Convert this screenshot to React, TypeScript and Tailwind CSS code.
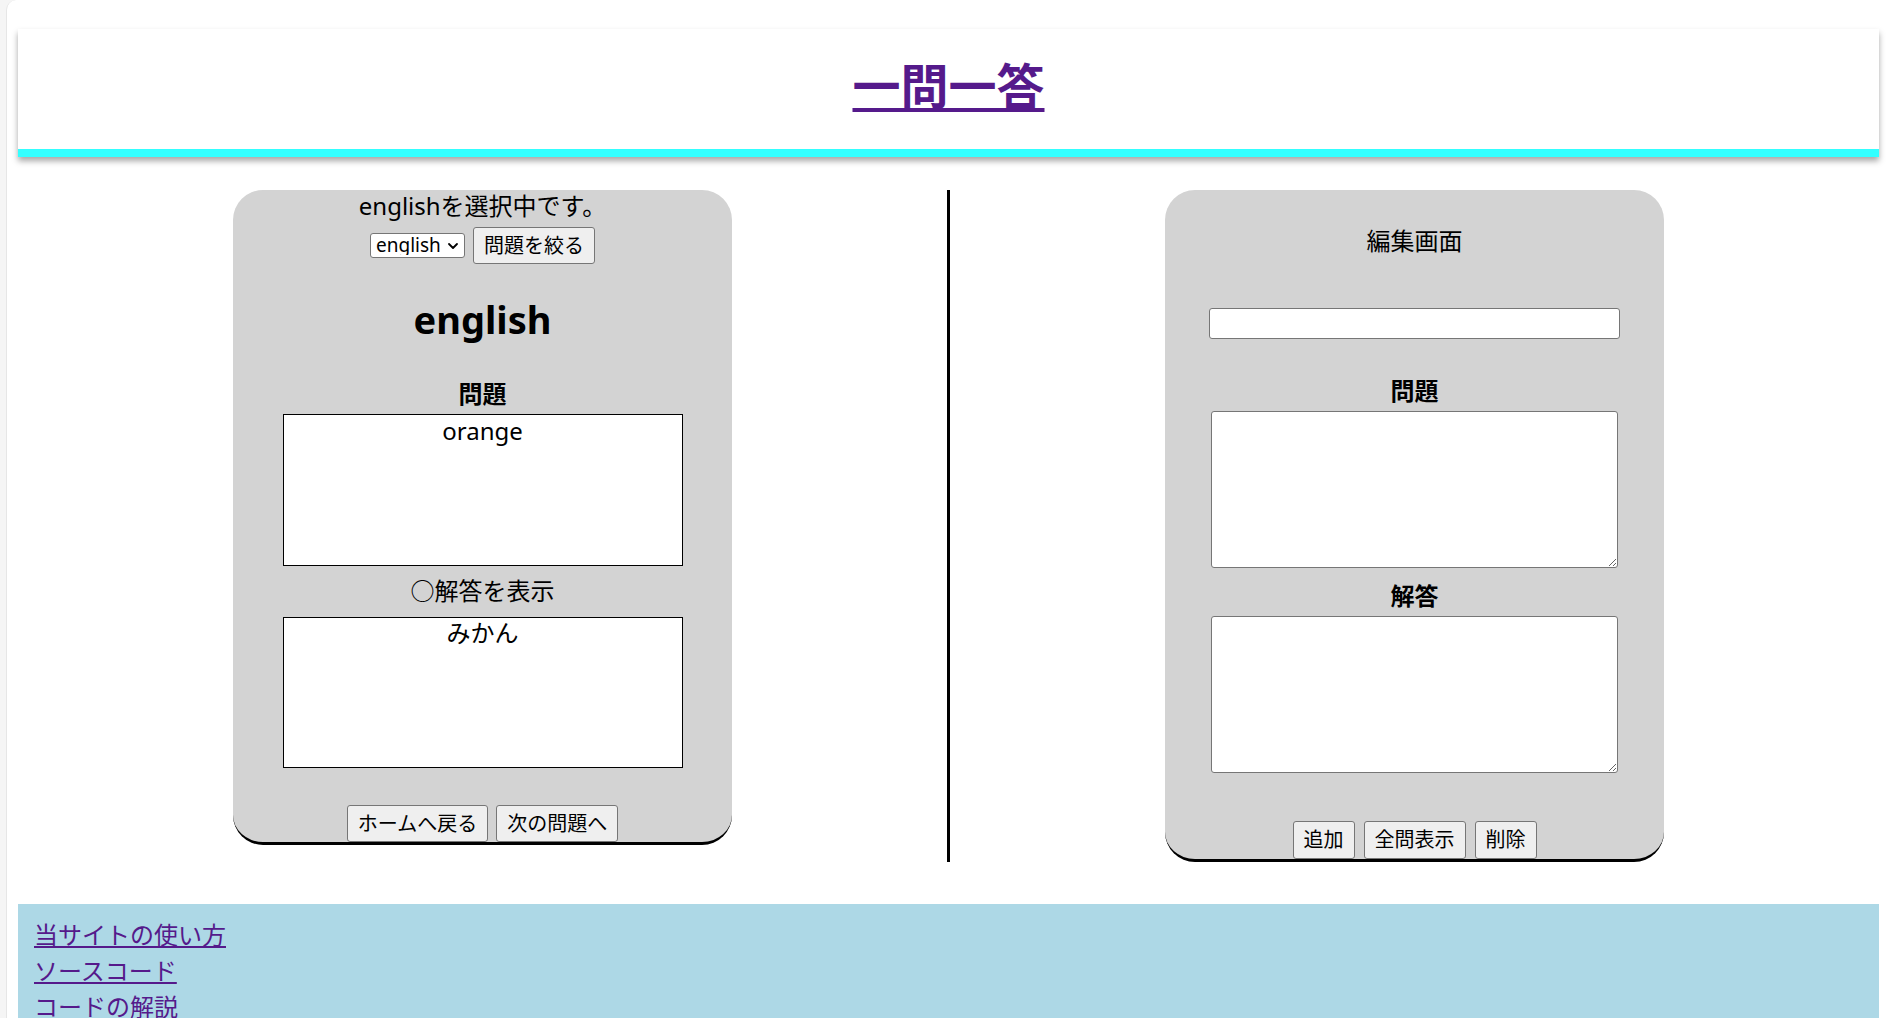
import { ChevronDown } from 'lucide-react';

const FONT = "font-['Noto_Sans','Noto_Sans_CJK_JP',sans-serif]";

function Btn({ children, tall = false }: { children: React.ReactNode; tall?: boolean }) {
  return (
    <button
      type="button"
      className={`${tall ? 'h-[38px]' : 'h-[37px]'} px-[10px] bg-[#efefef] border border-[#767676] rounded-[3px] text-[20px] leading-none text-black`}
    >
      {children}
    </button>
  );
}

function QuizCard() {
  return (
    <section className="self-start w-[499px] bg-[#d3d3d3] rounded-[30px] border-b-[3px] border-black flex flex-col items-center pt-[1px] text-black">
      <p className="text-[24px] leading-[30px]">englishを選択中です。</p>

      {/* 分野の絞り込み */}
      <div className="mt-[6px] flex items-center gap-2">
        <div className="relative">
          <select className="appearance-none w-[95px] h-[25px] bg-white border border-[#767676] rounded-[3px] pl-[5px] text-[19px] leading-none">
            <option>english</option>
          </select>
          <ChevronDown className="absolute right-[4px] top-[5px] w-[16px] h-[16px] pointer-events-none" strokeWidth={2.75} />
        </div>
        <Btn>問題を絞る</Btn>
      </div>

      <h2 className="mt-[36px] text-[38px] leading-[38px] font-bold">english</h2>

      <h3 className="mt-[41px] text-[24px] leading-[30px] font-bold">問題</h3>
      <div className="mt-[5px] w-[400px] h-[152px] bg-white border border-black text-center text-[24px] leading-[30px] pt-[1px]">
        orange
      </div>

      <p className="mt-[10px] text-[24px] leading-[30px]">○解答を表示</p>
      <div className="mt-[11px] w-[400px] h-[151px] bg-white border border-black text-center text-[24px] leading-[30px]">
        みかん
      </div>

      <div className="mt-[37px] flex gap-2">
        <Btn>ホームへ戻る</Btn>
        <Btn>次の問題へ</Btn>
      </div>
    </section>
  );
}

function EditCard() {
  return (
    <section className="self-start w-[499px] bg-[#d3d3d3] rounded-[30px] border-b-[3px] border-black flex flex-col items-center pt-[36px] text-black">
      <p className="text-[24px] leading-[30px]">編集画面</p>

      <input
        type="text"
        className="mt-[52px] w-[411px] h-[31px] bg-white border border-[#767676] rounded-[3px] px-1 text-[20px]"
      />

      <h3 className="mt-[37px] text-[24px] leading-[30px] font-bold">問題</h3>
      <textarea className="mt-[5px] w-[407px] h-[157px] bg-white border border-[#767676] rounded-[3px] resize" />

      <h3 className="mt-[13px] text-[24px] leading-[30px] font-bold">解答</h3>
      <textarea className="mt-[5px] w-[407px] h-[157px] bg-white border border-[#767676] rounded-[3px] resize" />

      <div className="mt-[48px] flex gap-[9px]">
        <Btn tall>追加</Btn>
        <Btn tall>全問表示</Btn>
        <Btn tall>削除</Btn>
      </div>
    </section>
  );
}

export default function App() {
  return (
    <div className={`min-h-screen bg-[#f5f5f5] ${FONT}`}>
      <div className="ml-[6px] min-h-screen bg-white rounded-tl-[10px] border-l border-[#e6e6e6] pt-[29px] pl-[11px] pr-[9px]">
        {/* ヘッダー */}
        <header className="bg-white border-b-[8px] border-[#33ffff] shadow-[0_4px_6px_rgba(0,0,0,0.35)]">
          <div className="h-[120px] flex items-center justify-center pb-[7px]">
            <h1 className="text-[48px] leading-[60px] font-bold">
              <a href="#" className="text-[#551a8b] underline decoration-[4px] underline-offset-[4px]">
                一問一答
              </a>
            </h1>
          </div>
        </header>

        {/* メイン */}
        <main className="mt-[33px] flex justify-evenly items-stretch">
          <QuizCard />
          <div className="w-[3px] bg-black" />
          <EditCard />
        </main>

        {/* フッター */}
        <footer className="mt-[42px] bg-[#add8e6] pt-[13px] pb-6 pl-4 text-[24px] leading-[36px]">
          <ul>
            <li><a href="#" className="text-[#551a8b] underline">当サイトの使い方</a></li>
            <li><a href="#" className="text-[#551a8b] underline">ソースコード</a></li>
            <li><a href="#" className="text-[#551a8b] underline">コードの解説</a></li>
          </ul>
        </footer>
      </div>
    </div>
  );
}
